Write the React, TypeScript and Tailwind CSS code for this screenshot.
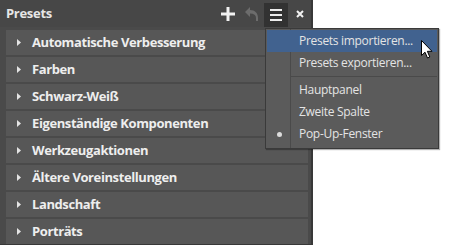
import React from "react";

const presets = [
  "Automatische Verbesserung",
  "Farben",
  "Schwarz-Weiß",
  "Eigenständige Komponenten",
  "Werkzeugaktionen",
  "Ältere Voreinstellungen",
  "Landschaft",
  "Porträts",
];

const menuItems = [
  { label: "Presets importieren...", active: true },
  { label: "Presets exportieren..." },
  { sep: true },
  { label: "Hauptpanel" },
  { label: "Zweite Spalte" },
  { label: "Pop-Up-Fenster", checked: true },
];

const font = { fontFamily: '"Open Sans", "Noto Sans", sans-serif' };

export default function App() {
  return (
    <div className="relative w-[450px] h-[245px] bg-white overflow-hidden" style={font}>
      {/* panel */}
      <div className="flex flex-col w-[313px] h-[245px] bg-[#4a4a4a] border-r-2 border-b border-[#383838]">
        <div className="flex items-center h-[27px] pl-[6px] pr-[7px] bg-[#474747]">
          <span className="text-[13px] font-bold tracking-[-0.3px] text-[#e6e6e6]">Presets</span>
          <div className="flex-1" />
          <svg width="16" height="16" viewBox="0 0 16 16">
            <path d="M8 1v14M1 8h14" stroke="#f2f2f2" strokeWidth="3" />
          </svg>
          <svg className="ml-[8px]" width="16" height="16" viewBox="0 0 16 16">
            <path
              d="M1 6 L6 1 L6 4 C11 4 14 7 14 12 L14 15 L12 15 L12 12 C12 9 10 7.5 6 7.5 L6 11 Z"
              fill="#6c6c6c"
            />
          </svg>
          <div className="ml-[4px] self-end flex flex-col items-center justify-center gap-[3px] w-[24px] h-[24px] bg-[#323232]">
            <span className="block w-[12px] h-[2px] bg-[#ededed]" />
            <span className="block w-[12px] h-[2px] bg-[#ededed]" />
            <span className="block w-[12px] h-[2px] bg-[#ededed]" />
          </div>
          <svg className="ml-[8px]" width="8" height="8" viewBox="0 0 8 8">
            <path d="M1 1L7 7M7 1L1 7" stroke="#f2f2f2" strokeWidth="2" />
          </svg>
        </div>
        <div className="flex flex-col gap-[2px] pt-[3px] pl-[6px] pr-[3px]">
          {presets.map((p) => (
            <div key={p} className="flex items-center h-[25px] bg-[#575757]">
              <svg className="ml-[11px]" width="4" height="7" viewBox="0 0 4 7">
                <path d="M0 0L4 3.5L0 7Z" fill="#e4e4e4" />
              </svg>
              <span className="ml-[11px] text-[13px] font-bold tracking-[-0.4px] text-[#eeeeee] leading-none">
                {p}
              </span>
            </div>
          ))}
        </div>
      </div>

      {/* dropdown menu */}
      <div className="absolute left-[265px] top-[28px] w-[174px] p-[1px] pb-[3px] bg-[#5b5b5b] border border-[#3a3a3a] shadow-[1px_1px_1px_rgba(0,0,0,0.3)]">
        <div className="absolute left-[24px] top-0 bottom-0 w-px bg-[#4a4a4a]" />
        {menuItems.map((m, i) =>
          m.sep ? (
            <div key={i} className="relative h-[5px] flex items-center pl-[24px]">
              <div className="w-full h-px bg-[#4a4a4a]" />
            </div>
          ) : (
            <div
              key={i}
              className={`relative flex items-center h-[22px] pl-[32px] text-[12px] tracking-[-0.3px] text-[#e4e4e4] ${
                m.active ? "bg-[#41628f]" : ""
              }`}
            >
              {m.checked && (
                <span className="absolute left-[10px] top-[9px] w-[5px] h-[5px] rounded-full bg-[#dcdcdc]" />
              )}
              {m.label}
            </div>
          )
        )}
      </div>

      {/* cursor */}
      <svg className="absolute left-[421px] top-[40px]" width="13" height="20" viewBox="0 0 13 20">
        <path
          d="M0.5 0.5 L0.5 15.5 L4 12.2 L6.5 18 L8.8 17 L6.4 11.3 L11 11.3 Z"
          fill="#ffffff"
          stroke="#000000"
          strokeWidth="1"
          strokeLinejoin="miter"
        />
      </svg>
    </div>
  );
}
